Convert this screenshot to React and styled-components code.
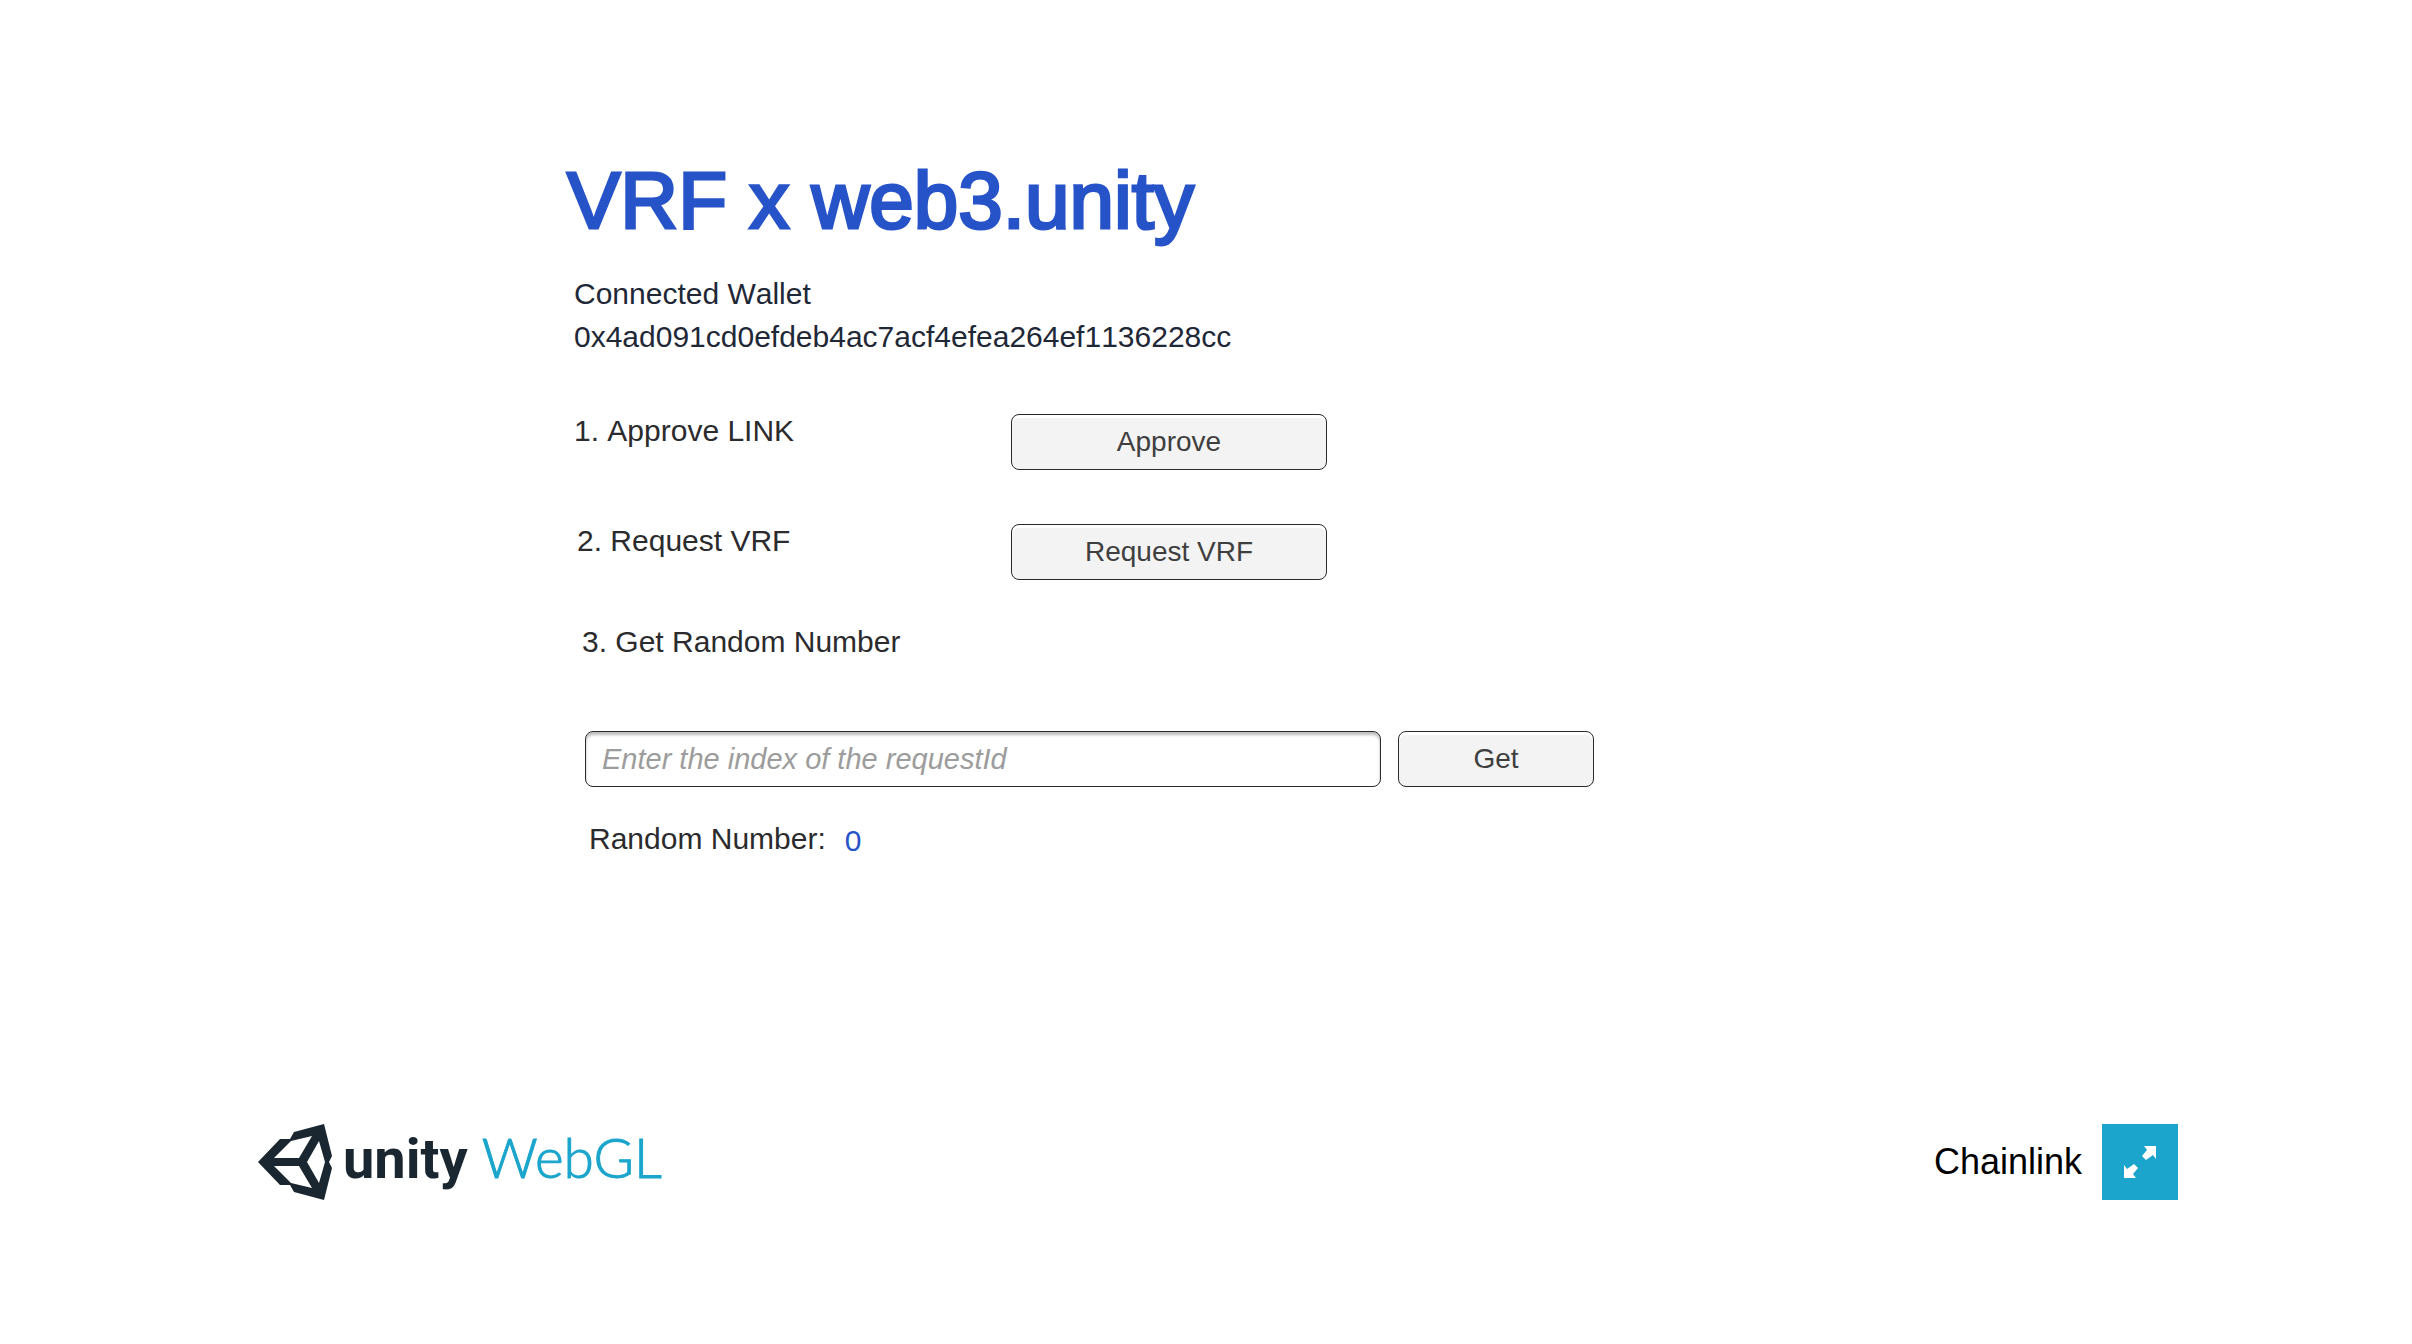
import React, { useState } from "react";
import styled, { createGlobalStyle } from "styled-components";

const GlobalStyle = createGlobalStyle`
  *, *::before, *::after { box-sizing: border-box; }
  body {
    margin: 0;
    background: #fff;
    font-family: "Liberation Sans", Arial, sans-serif;
  }
`;

const Page = styled.div`
  display: flex;
  flex-direction: column;
  min-height: 100vh;
  padding: 44px 234px 0 258px;
`;

const Scene = styled.main`
  display: flex;
  flex-direction: column;
  min-height: 1080px;
  padding: 109px 584px 0 308px;
  font-kerning: none;
`;

const Title = styled.h1`
  margin: 0;
  padding-left: 1px;
  color: #2753c8;
  font-size: 80px;
  font-weight: 400;
  font-kerning: normal;
  line-height: 96px;
  -webkit-text-stroke: 3px #2753c8;
  stroke-linejoin: round;
`;

const Wallet = styled.section`
  margin-top: 23px;
  padding-left: 8px;
  color: #1f2837;
  font-size: 30px;
  line-height: 43px;
`;

const WalletLine = styled.p`
  margin: 0;
`;

const Steps = styled.section`
  display: flex;
  flex-direction: column;
  gap: 54px;
  margin-top: 56px;
  margin-bottom: 45px;
`;

const StepRow = styled.div`
  display: grid;
  grid-template-columns: 445px 316px;
  align-items: start;
`;

const StepLabel = styled.label`
  padding-left: ${(p) => p.$indent}px;
  color: #2b2b2d;
  font-size: 30px;
  line-height: 34px;
`;

const Button = styled.button`
  height: 56px;
  padding: 0;
  border: 1px solid #2a2a2a;
  border-radius: 8px;
  background: #f3f3f3;
  box-shadow: inset 0 3px 0 #fff;
  color: #3f3f3f;
  font-family: inherit;
  font-size: 28px;
  font-kerning: inherit;
  line-height: 32px;
  cursor: pointer;
`;

const RequestForm = styled.form`
  display: grid;
  grid-template-columns: 1fr 196px;
  column-gap: 17px;
  margin-top: 72px;
  padding-left: 19px;
`;

const RequestInput = styled.input`
  min-width: 0;
  height: 56px;
  padding: 0 16px;
  border: 1px solid #2a2a2a;
  border-radius: 8px;
  background: #fff;
  box-shadow: inset 0 3px 3px #bdbdbd;
  color: #333;
  font-family: inherit;
  font-size: 29px;
  font-kerning: inherit;
  &::placeholder {
    color: #9c9c9c;
    font-style: italic;
    opacity: 1;
  }
`;

const Result = styled.div`
  display: flex;
  gap: 19px;
  margin-top: 34px;
  padding-left: 23px;
  color: #2b2b2d;
  font-size: 30px;
  line-height: 36px;
`;

const ResultValue = styled.output`
  color: #2753c8;
  line-height: 40px;
`;

const Footer = styled.footer`
  display: flex;
  align-items: center;
  height: 76px;
`;

const Logo = styled.div`
  display: flex;
  align-items: center;
`;

const LogoMark = styled.svg`
  width: 74px;
  height: 76px;
  margin-right: 11px;
`;

const LogoText = styled.div`
  display: flex;
  align-items: baseline;
  gap: 14px;
  padding-bottom: 8px;
  line-height: 68px;
`;

const LogoUnity = styled.span`
  color: #1a2630;
  font-family: Roboto, sans-serif;
  font-size: 56px;
  font-weight: 700;
`;

const LogoWebGL = styled.span`
  color: #1ba5cc;
  font-family: Lato, sans-serif;
  font-size: 55px;
  font-weight: 300;
  -webkit-text-stroke: 1px #1ba5cc;
`;

const ProjectName = styled.span`
  margin-left: auto;
  color: #000;
  font-size: 36px;
  line-height: 42px;
`;

const FullscreenButton = styled.button`
  width: 76px;
  height: 76px;
  margin-left: 20px;
  padding: 0;
  border: 0;
  background: #1ba5cc;
  cursor: pointer;
`;

const FullscreenIcon = styled.svg`
  display: block;
  width: 76px;
  height: 76px;
`;

export default function App() {
  const [index, setIndex] = useState("");
  return (
    <Page>
      <GlobalStyle />
      <Scene>
        <Title>VRF x web3.unity</Title>
        <Wallet>
          <WalletLine>Connected Wallet</WalletLine>
          <WalletLine>0x4ad091cd0efdeb4ac7acf4efea264ef1136228cc</WalletLine>
        </Wallet>
        <Steps>
          <StepRow>
            <StepLabel htmlFor="approve" $indent={8}>1. Approve LINK</StepLabel>
            <Button id="approve" type="button">Approve</Button>
          </StepRow>
          <StepRow>
            <StepLabel htmlFor="request" $indent={11}>2. Request VRF</StepLabel>
            <Button id="request" type="button">Request VRF</Button>
          </StepRow>
        </Steps>
        <StepLabel htmlFor="index" $indent={16}>3. Get Random Number</StepLabel>
        <RequestForm onSubmit={(e) => e.preventDefault()}>
          <RequestInput
            id="index"
            placeholder="Enter the index of the requestId"
            value={index}
            onChange={(e) => setIndex(e.target.value)}
          />
          <Button type="submit">Get</Button>
        </RequestForm>
        <Result>
          <span>Random Number:</span>
          <ResultValue htmlFor="index">0</ResultValue>
        </Result>
      </Scene>
      <Footer>
        <Logo>
          <LogoMark viewBox="0 0 74 76" aria-hidden="true">
            <path
              fill="#1a2630"
              fillRule="evenodd"
              d="M0 38 22 15H32L36 8 66 0 74 32 71 38 74 44 66 76 36 68 32 61H22ZM16 34H41L54 12 33 17ZM16 42 33 59 54 64 41 42ZM49 38 61 59 67 38 61 17Z"
            />
          </LogoMark>
          <LogoText>
            <LogoUnity>unity</LogoUnity>
            <LogoWebGL>WebGL</LogoWebGL>
          </LogoText>
        </Logo>
        <ProjectName>Chainlink</ProjectName>
        <FullscreenButton type="button" aria-label="Fullscreen">
          <FullscreenIcon viewBox="0 0 76 76" aria-hidden="true">
            <path
              fill="#fff"
              d="M42 22H54V35L51 31 44 36 40 32 45 26ZM34 54H22V41L25 45 32 40 36 44 31 50Z"
            />
          </FullscreenIcon>
        </FullscreenButton>
      </Footer>
    </Page>
  );
}
